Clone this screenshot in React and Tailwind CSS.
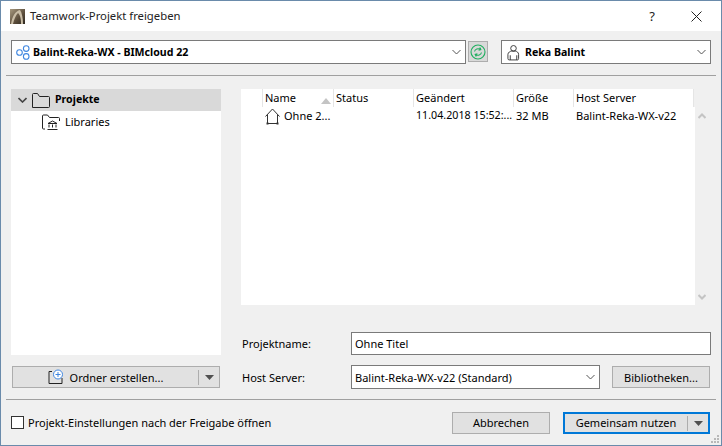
import React from 'react';

const Chevron = ({ className = 'text-[#555]' }) => (
  <svg width="9" height="6" viewBox="0 0 9 6" fill="none" stroke="currentColor" strokeWidth="1" className={className}>
    <path d="M.5 1l4 4 4-4" />
  </svg>
);

const Caret = () => (
  <svg width="9" height="5" viewBox="0 0 9 5" className="text-[#505050]">
    <path d="M0 0h9L4.5 5z" fill="currentColor" />
  </svg>
);

const Button = ({ className = '', children }) => (
  <div className={`h-[22px] flex items-center justify-center border border-[#adadad] bg-[#e1e1e1] ${className}`}>
    {children}
  </div>
);

const columns = [
  { name: 'Name', width: 'w-[71px]', value: '' },
  { name: 'Status', width: 'w-[80px]', value: '' },
  { name: 'Geändert', width: 'w-[100px]', value: '11.04.2018 15:52:...', text: 'text-[10.7px]' },
  { name: 'Größe', width: 'w-[60px]', value: '32 MB', text: '' },
  { name: 'Host Server', width: 'w-[120px]', value: 'Balint-Reka-WX-v22', text: '' },
];

export default function App() {
  return (
    <div className="relative w-[722px] h-[446px] overflow-hidden flex flex-col border border-[#6a8bab] bg-[#f0f0f0] text-[11px] leading-none text-black font-['Noto_Sans','Liberation_Sans',sans-serif]">
      {/* title bar */}
      <div className="h-[30px] shrink-0 bg-white flex items-center pl-[9px]">
        <svg width="15" height="15" viewBox="0 0 15 15">
          <defs>
            <linearGradient id="logo" x1="0" y1="0" x2="1" y2="1">
              <stop offset="0" stopColor="#a89a80" />
              <stop offset="0.6" stopColor="#5a4c3a" />
              <stop offset="1" stopColor="#2e2820" />
            </linearGradient>
          </defs>
          <rect width="15" height="15" fill="url(#logo)" />
          <path d="M1 15C2 8 5 2 10 1c2 3 3 8 3 14h-2C11 9 10 6 8 4 6 6 4 10 3 15z" fill="#c9bda6" />
        </svg>
        <span className="ml-[5px] text-[11.3px] text-[#222]">Teamwork-Projekt freigeben</span>
        <span className="ml-auto mr-[36px] text-[13px] text-[#222]">?</span>
        <svg width="11" height="11" viewBox="0 0 11 11" className="mr-[19px] text-[#222]" fill="none" stroke="currentColor">
          <path d="M.5.5l10 10M10.5.5l-10 10" />
        </svg>
      </div>

      {/* server + user */}
      <div className="flex items-start h-[44px] shrink-0 px-[10px] pt-[9px]">
        <div className="w-[455px] h-[24px] flex items-center bg-white border border-[#7a7a7a] pl-[4px] pr-[4px]">
          <svg width="15" height="15" viewBox="0 0 15 15" fill="none" stroke="#3f86e0" strokeWidth="1.1">
            <circle cx="3.5" cy="7.5" r="2.8" />
            <circle cx="10.2" cy="3.6" r="2.8" />
            <circle cx="10.2" cy="11.4" r="2.8" />
          </svg>
          <span className="ml-[2px] font-bold text-[10.6px]">Balint-Reka-WX - BIMcloud 22</span>
          <Chevron className="ml-auto text-[#555]" />
        </div>
        <div className="ml-[2px] mt-px w-[20px] h-[21px] flex items-center justify-center bg-[#d9d9d9] border border-[#adadad]">
          <svg width="16" height="16" viewBox="0 0 16 16" fill="none" stroke="#1fae5f" strokeWidth="1.1">
            <circle cx="8" cy="8" r="7" />
            <path d="M4.5 7.500C5 5 8 3.800 10.500 5.500M9.800 3.500l1 2.200-2.200.5M11.500 8.500C11 11 8 12.200 5.500 10.500M6.200 12.500l-1-2.200 2.200-.5" />
          </svg>
        </div>
        <div className="ml-[13px] w-[210px] h-[24px] flex items-center bg-white border border-[#7a7a7a] pl-[5px] pr-[4px]">
          <svg width="13" height="17" viewBox="0 0 14 18" fill="none" stroke="#333" strokeWidth="1">
            <circle cx="7" cy="4.500" r="3" />
            <path d="M2.500 17h9a1.500 1.500 0 0 0 1-1.500V11c0-2-2-3.500-3.500-3.500h-4C3.500 7.500 1 9 1 11v4.500A1.500 1.500 0 0 0 2.500 17zM3.500 12v5M10.500 12v5" />
          </svg>
          <span className="ml-[5px] font-bold text-[10.6px]">Reka Balint</span>
          <Chevron className="ml-auto text-[#555]" />
        </div>
      </div>

      <div className="h-px shrink-0 mx-[5px] bg-[#a0a0a0]" />

      {/* tree + list */}
      <div className="flex px-[10px] pt-[13px] flex-1 min-h-0">
        <div className="w-[210px] shrink-0 flex flex-col">
          <div className="h-[266px] bg-white">
            <div className="h-[22px] flex items-center bg-[#d9d9d9] pl-[7px]">
              <svg width="9" height="6" viewBox="0 0 9 6" fill="none" stroke="#444" strokeWidth="1.6"><path d="M.5 1l4 4 4-4" /></svg>
              <svg width="18" height="15" viewBox="0 0 18 15" fill="none" stroke="#222" className="ml-[5px]">
                <path d="M.5 14.500V1.500a1 1 0 0 1 1-1h4l2 3h9a1 1 0 0 1 1 1v9a1 1 0 0 1-1 1z" />
              </svg>
              <span className="ml-[5px] font-bold text-[10.6px] -mt-px">Projekte</span>
            </div>
            <div className="h-[22px] flex items-center pl-[31px]">
              <svg width="18" height="16" viewBox="0 0 18 16" fill="none" stroke="#222">
                <path d="M.5 14V2a1 1 0 0 1 1-1h4l2 2.500h9a1 1 0 0 1 1 1V7M.5 14a1 1 0 0 0 1 1H3" />
                <path d="M6 9.500l4.500-2.500 4.500 2.500zM7 10.500v3M10.500 10.500v3M14 10.500v3M5.500 15.500h10" />
              </svg>
              <span className="ml-[5px] -mt-px">Libraries</span>
            </div>
          </div>
          <div className="mt-[11px] ml-px w-[208px] h-[22px] flex items-center border border-[#adadad] bg-[#e1e1e1]">
            <div className="flex-1 flex items-center justify-center">
              <svg width="16" height="16" viewBox="0 0 16 16" fill="none">
                <path d="M1 6v8.500h13V9M1 6V2.500h3" stroke="#222" />
                <circle cx="10" cy="5.500" r="4.500" fill="#fff" stroke="#3f86e0" />
                <path d="M7.500 5.500h5M10 3v5" stroke="#3f86e0" />
              </svg>
              <span className="ml-[6px]">Ordner erstellen...</span>
            </div>
            <div className="h-[15px] w-px bg-[#adadad]" />
            <div className="w-[20px] flex justify-center"><Caret /></div>
          </div>
        </div>

        <div className="ml-[20px] flex-1 flex flex-col">
          <div className="w-[469px] h-[216px] flex">
            <div className="w-[454px] flex flex-col">
              <div className="flex h-[18px] w-[453px] bg-white">
                <div className="w-[22px] border-r border-[#e5e5e5]" />
                {columns.map((c) => (
                  <div key={c.name} className={`${c.width} relative border-r border-[#e5e5e5] pl-[2px] pb-px flex items-center`}>
                    {c.name}
                    {c.name === 'Name' && (
                      <svg width="10" height="6" viewBox="0 0 10 6" className="absolute right-[2px] bottom-[3px]">
                        <path d="M0 6h10L5 0z" fill="#c4c4c4" />
                      </svg>
                    )}
                  </div>
                ))}
              </div>
              <div className="flex-1 bg-white">
                <div className="flex h-[18px] items-center whitespace-nowrap">
                  <div className="w-[24px]" />
                  <div className="w-[69px] flex items-center">
                    <svg width="15" height="17" viewBox="0 0 15 17" fill="none" stroke="#333">
                      <path d="M.5 8.500L7.500 1l7 7.500M2.500 6.500V15.500h10V6.500" />
                      <rect x="1.500" y="14.500" width="2" height="2" fill="#333" stroke="none" />
                      <rect x="11.500" y="14.500" width="2" height="2" fill="#333" stroke="none" />
                    </svg>
                    <span className="ml-[4px] pb-px">Ohne 2...</span>
                  </div>
                  <div className="w-[80px]" />
                  {columns.slice(2).map((c) => (
                    <div key={c.name} className={`${c.width} ${c.text} pl-[2px] pb-px`}>{c.value}</div>
                  ))}
                </div>
              </div>
            </div>
            {/* scrollbar */}
            <div className="flex-1 flex flex-col items-center justify-between pt-[24px] pb-[5px] pr-[1px]">
              <svg width="8" height="6" viewBox="0 0 8 6" fill="none" stroke="#c4c4c4" strokeWidth="2"><path d="M.5 5L4 1.500 7.500 5" /></svg>
              <svg width="8" height="6" viewBox="0 0 8 6" fill="none" stroke="#c4c4c4" strokeWidth="2"><path d="M.5 1L4 4.500 7.500 1" /></svg>
            </div>
          </div>

          <div className="mt-[27px] flex items-center h-[23px] w-[470px]">
            <span className="w-[110px] pl-px">Projektname:</span>
            <div className="flex-1 h-[23px] flex items-center bg-white border border-[#7a7a7a] pl-[3px]">Ohne Titel</div>
          </div>
          <div className="mt-[10px] flex items-center h-[24px] w-[470px]">
            <span className="w-[110px] pl-px">Host Server:</span>
            <div className="w-[249px] h-[24px] flex items-center bg-white border border-[#7a7a7a] pl-[3px] pr-[4px]">
              Balint-Reka-WX-v22 (Standard)
              <Chevron className="ml-auto text-[#555]" />
            </div>
            <Button className="ml-[12px] w-[98px]">Bibliotheken...</Button>
          </div>
        </div>
      </div>

      <div className="h-px shrink-0 mx-[5px] bg-[#a0a0a0]" />

      {/* footer */}
      <div className="h-[45px] shrink-0 flex items-start pt-[12px] pl-[10px] pr-[11px]">
        <div className="mt-[4px] w-[13px] h-[13px] bg-white border border-[#333]" />
        <span className="ml-[4px] mt-[5px]">Projekt-Einstellungen nach der Freigabe öffnen</span>
        <Button className="ml-auto w-[98px] pb-px">Abbrechen</Button>
        <div className="ml-[13px] w-[147px] h-[22px] flex items-center border-2 border-[#0078d7] bg-[#e1e1e1]">
          <div className="flex-1 text-center pb-px">Gemeinsam nutzen</div>
          <div className="h-[15px] w-px bg-[#adadad]" />
          <div className="w-[20px] flex justify-center"><Caret /></div>
        </div>
      </div>

      {/* resize grip */}
      <svg width="10" height="10" viewBox="0 0 10 10" className="absolute right-[1px] bottom-[1px]" fill="#b8b8b8">
        <rect x="7" y="1" width="2" height="2" />
        <rect x="4" y="4" width="2" height="2" />
        <rect x="7" y="4" width="2" height="2" />
        <rect x="1" y="7" width="2" height="2" />
        <rect x="4" y="7" width="2" height="2" />
        <rect x="7" y="7" width="2" height="2" />
      </svg>
    </div>
  );
}
